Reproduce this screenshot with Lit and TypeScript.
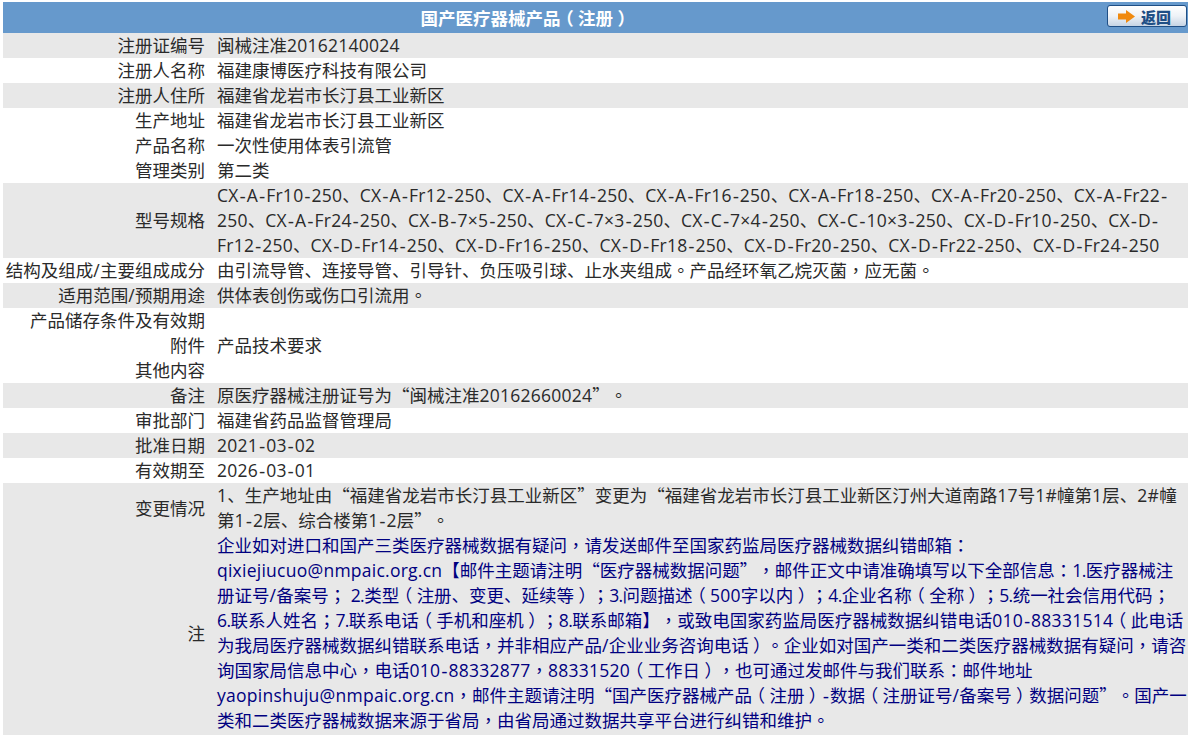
import { LitElement, html, css } from "lit";
import { customElement } from "lit/decorators.js";

const rows: [string, string, boolean][] = [
  ["注册证编号", "闽械注准20162140024", true],
  ["注册人名称", "福建康博医疗科技有限公司", false],
  ["注册人住所", "福建省龙岩市长汀县工业新区", true],
  ["生产地址", "福建省龙岩市长汀县工业新区", false],
  ["产品名称", "一次性使用体表引流管", false],
  ["管理类别", "第二类", false],
  ["型号规格", "CX-A-Fr10-250、CX-A-Fr12-250、CX-A-Fr14-250、CX-A-Fr16-250、CX-A-Fr18-250、CX-A-Fr20-250、CX-A-Fr22-250、CX-A-Fr24-250、CX-B-7×5-250、CX-C-7×3-250、CX-C-7×4-250、CX-C-10×3-250、CX-D-Fr10-250、CX-D-Fr12-250、CX-D-Fr14-250、CX-D-Fr16-250、CX-D-Fr18-250、CX-D-Fr20-250、CX-D-Fr22-250、CX-D-Fr24-250", true],
  ["结构及组成/主要组成成分", "由引流导管、连接导管、引导针、负压吸引球、止水夹组成。产品经环氧乙烷灭菌，应无菌。", false],
  ["适用范围/预期用途", "供体表创伤或伤口引流用。", true],
  ["产品储存条件及有效期", "", false],
  ["附件", "产品技术要求", false],
  ["其他内容", "", false],
  ["备注", "原医疗器械注册证号为“闽械注准20162660024”。", true],
  ["审批部门", "福建省药品监督管理局", false],
  ["批准日期", "2021-03-02", true],
  ["有效期至", "2026-03-01", false],
  ["变更情况", "1、生产地址由“福建省龙岩市长汀县工业新区”变更为“福建省龙岩市长汀县工业新区汀州大道南路17号1#幢第1层、2#幢第1-2层、综合楼第1-2层”。", true],
];
const note = "企业如对进口和国产三类医疗器械数据有疑问，请发送邮件至国家药监局医疗器械数据纠错邮箱：qixiejiucuo@nmpaic.org.cn【邮件主题请注明“医疗器械数据问题”，邮件正文中请准确填写以下全部信息：1.医疗器械注册证号/备案号； 2.类型（注册、变更、延续等）；3.问题描述（500字以内）；4.企业名称（全称）；5.统一社会信用代码；6.联系人姓名；7.联系电话（手机和座机）；8.联系邮箱】，或致电国家药监局医疗器械数据纠错电话010-88331514（此电话为我局医疗器械数据纠错联系电话，并非相应产品/企业业务咨询电话）。企业如对国产一类和二类医疗器械数据有疑问，请咨询国家局信息中心，电话010-88332877，88331520（工作日），也可通过发邮件与我们联系：邮件地址yaopinshuju@nmpaic.org.cn，邮件主题请注明“国产医疗器械产品（注册）-数据（注册证号/备案号）数据问题”。国产一类和二类医疗器械数据来源于省局，由省局通过数据共享平台进行纠错和维护。";

function fmt(text: string) {
  const parts = text.split(/(\d\.[\u4e00-\u9fff]|[，；：。（）“”]|-|[A-Za-z0-9@.#×\/]+)/).filter((s) => s);
  return parts.map((p) => {
    if (/^\d\.[\u4e00-\u9fff]$/.test(p)) return html`<span class="nb"><span class="nd">${p.slice(0, 2)}</span>${p.slice(2)}</span>`;
    if (p === "（") return html`<span class="po">${p}</span>`;
    if (p === "）") return html`<span class="pc">${p}</span>`;
    if ("，；：。".includes(p)) return html`<span class="tc">${p}</span>`;
    if (p === "“" || p === "”") return html`<span class="q">${p}</span>`;
    if (p === "-") return html`<span class="hy">${p}</span>`;
    if (/^[A-Za-z0-9@.#×\/]+$/.test(p)) return html`<span class="la">${p}</span>`;
    return p;
  });
}

@customElement("app-root")
export class AppRoot extends LitElement {
  static styles = css`
    :host {
      display: block;
      font-family: "Open Sans", "Noto Sans CJK SC", sans-serif;
      font-size: 17.5px;
      color: #2a2a2a;
      padding: 2px 3px 0 3px;
      overflow: hidden;
      height: 733px;
      text-spacing-trim: space-all;
    }
    .head {
      height: 31px;
      padding-right: 140px;
      background: #6699cc;
      position: relative;
      display: flex;
      align-items: center;
      justify-content: center;
      color: #fff;
      font-weight: 700;
      white-space: nowrap;
    }
    .back {
      position: absolute;
      right: 1px;
      top: 3px;
      width: 80px;
      height: 22px;
      box-sizing: border-box;
      padding-left: 10px;
      border: 1px solid #1f4f86;
      border-radius: 3px;
      background: linear-gradient(#ffffff, #eef2f7 50%, #c6d4e4);
      display: flex;
      align-items: center;
      gap: 6px;
      color: #1f4f86;
      font-family: "Noto Sans CJK SC", sans-serif;
      font-size: 15px;
      font-weight: 900;
      line-height: 1;
    }
    .row {
      display: grid;
      grid-template-columns: 202px 971px;
      column-gap: 12px;
      line-height: 25px;
      align-items: center;
    }
    .row.alt { background: #e8e8e8; }
    .label { text-align: right; white-space: nowrap; }
    .value { min-height: 25px; }
    .note { color: #000080; }
    .last { padding-bottom: 2px; }
    .la { letter-spacing: 0.25px; }
    .nb { white-space: nowrap; }
    .nd { letter-spacing: -0.6px; }
    .hy { font-family: "DejaVu Sans", sans-serif; line-height: 0; margin: 0 0.9px; }
    .tc { font-family: "Noto Sans CJK TC", sans-serif; line-height: 0; }
    .q { font-family: "Noto Sans CJK SC", sans-serif; line-height: 0; }
    .po { margin-left: -0.25em; margin-right: 0.25em; font-family: "Noto Sans CJK SC", sans-serif; line-height: 0; }
    .pc { margin-left: 0.25em; margin-right: -0.25em; font-family: "Noto Sans CJK SC", sans-serif; line-height: 0; }
  `;
  render() {
    return html`
      <div>
        <div class="head">
          <span>国产医疗器械产品${fmt("（注册）")}</span>
          <div class="back">
            <svg width="17" height="13" viewBox="0 0 17 13"><path d="M0 3.5h8V0l9 6.5L8 13V9.5H0z" fill="#f08a10"/></svg>
            <span>返回</span>
          </div>
        </div>
        ${rows.map(([l, v, alt]) => html`<div class="row ${alt ? "alt" : ""}"><div class="label">${fmt(l)}</div><div class="value">${fmt(v)}</div></div>`)}
        <div class="row alt last"><div class="label">注</div><div class="value note">${fmt(note)}</div></div>
      </div>
    `;
  }
}
